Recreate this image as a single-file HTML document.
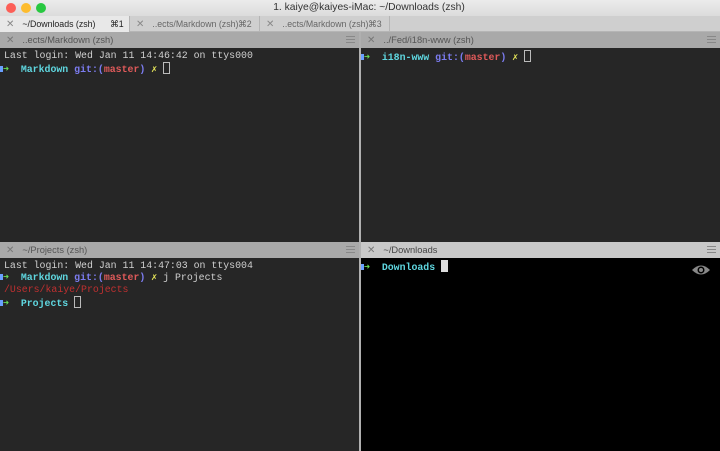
<!DOCTYPE html><html><head><style>
body{margin:0;width:720px;height:451px;overflow:hidden;background:#262626;font-family:"Liberation Sans",sans-serif;position:relative}
div{position:absolute;box-sizing:border-box}
.t{font-family:"Liberation Mono",monospace;font-size:9.9px;line-height:12px;color:#d0d0d0;white-space:pre;font-weight:normal}
.b{font-weight:bold}
.cy{color:#5fd7e0}.bl{color:#7c7cf0}.rd{color:#e05a5a}.ye{color:#e8e85a}.gr{color:#66dd55}
.cur{display:inline-block;width:5px;height:10px;border:1px solid #bbb;vertical-align:-2px}
.hd{font-size:9.3px;color:#555;line-height:16px;white-space:nowrap;overflow:hidden}
.tb{font-size:8.8px}
.x{color:#888;font-size:10px;margin:0 8px 0 6px}
.hm{right:4px;top:4px;width:9px;height:7px;border-top:1px solid #888;border-bottom:1px solid #888}
.hm:after{content:"";position:absolute;left:0;right:0;top:2px;border-top:1px solid #888}
.ar{display:inline-block;width:3px;height:6px;background:#6aa0ff;vertical-align:0}
</style></head><body>
<div style="left:0;top:0;width:720px;height:16px;background:linear-gradient(#ececec,#dcdcdc);font-size:10.3px;color:#333;text-align:center;line-height:16px;padding-left:18px">1. kaiye@kaiyes-iMac: ~/Downloads (zsh)</div>
<div style="left:6px;top:3px;width:10px;height:10px;border-radius:5px;background:#fc5f57"></div>
<div style="left:21px;top:3px;width:10px;height:10px;border-radius:5px;background:#fdbc2e"></div>
<div style="left:36px;top:3px;width:10px;height:10px;border-radius:5px;background:#28c840"></div>
<div style="left:0;top:16px;width:720px;height:16px;background:#cfcfcf;border-bottom:1px solid #b5b5b5"></div>
<div class="hd tb" style="left:0;top:16px;width:130px;height:16px;background:#e8e8e8;color:#222;border-right:1px solid #b5b5b5"><span class="x">✕</span>~/Downloads (zsh)<span style="position:absolute;left:110px">⌘1</span></div>
<div class="hd tb" style="left:130px;top:16px;width:130px;height:16px;color:#666;border-right:1px solid #b5b5b5"><span class="x">✕</span>..ects/Markdown (zsh)<span style="position:absolute;left:108px">⌘2</span></div>
<div class="hd tb" style="left:260px;top:16px;width:130px;height:16px;color:#666;border-right:1px solid #b5b5b5"><span class="x">✕</span>..ects/Markdown (zsh)<span style="position:absolute;left:108px">⌘3</span></div>
<div class="hd" style="left:0;top:32px;width:359px;height:16px;background:#a9a9a9;color:#555"><span class="x" style="color:#777">✕</span>..ects/Markdown (zsh)<div class="hm"></div></div>
<div class="hd" style="left:361px;top:32px;width:359px;height:16px;background:#a9a9a9;color:#555"><span class="x" style="color:#777">✕</span>../Fed/i18n-www (zsh)<div class="hm"></div></div>
<div style="left:359px;top:32px;width:2px;height:419px;background:#b0b0b0"></div>
<div class="t" style="left:4px;top:50px">Last login: Wed Jan 11 14:46:42 on ttys000</div>
<div class="t b" style="left:0;top:62px"><span class="ar"></span><span class="gr">➜ </span> <span class="cy">Markdown</span> <span class="bl">git:(</span><span class="rd">master</span><span class="bl">)</span> <span class="ye">✗</span> <span class="cur"></span></div>
<div class="t b" style="left:361px;top:50px"><span class="ar"></span><span class="gr">➜ </span> <span class="cy">i18n-www</span> <span class="bl">git:(</span><span class="rd">master</span><span class="bl">)</span> <span class="ye">✗</span> <span class="cur"></span></div>
<div class="hd" style="left:0;top:242px;width:359px;height:16px;background:#a9a9a9;color:#555"><span class="x" style="color:#777">✕</span>~/Projects (zsh)<div class="hm"></div></div>
<div class="hd" style="left:361px;top:242px;width:359px;height:16px;background:#c8c8c8;color:#444"><span class="x" style="color:#777">✕</span>~/Downloads<div class="hm"></div></div>
<div style="left:361px;top:258px;width:359px;height:193px;background:#000"></div>
<div class="t" style="left:4px;top:260px">Last login: Wed Jan 11 14:47:03 on ttys004</div>
<div class="t" style="left:0;top:272px"><b><span class="ar"></span><span class="gr">➜ </span> <span class="cy">Markdown</span> <span class="bl">git:(</span><span class="rd">master</span><span class="bl">)</span> <span class="ye">✗</span></b> j Projects</div>
<div class="t" style="left:4px;top:284px;color:#c03030">/Users/kaiye/Projects</div>
<div class="t b" style="left:0;top:296px"><span class="ar"></span><span class="gr">➜ </span> <span class="cy">Projects</span> <span class="cur"></span></div>
<div class="t b" style="left:361px;top:260px"><span class="ar"></span><span class="gr">➜ </span> <span class="cy">Downloads</span> <span class="cur" style="background:#ddd;border-color:#ddd"></span></div>
<svg style="position:absolute;left:691px;top:264px" width="20" height="12" viewBox="0 0 20 12"><path d="M1 6Q10-3 19 6Q10 15 1 6Z" fill="#888"/><circle cx="10" cy="6" r="3.5" fill="#000"/><circle cx="10" cy="6" r="2" fill="#888"/></svg>
</body></html>
